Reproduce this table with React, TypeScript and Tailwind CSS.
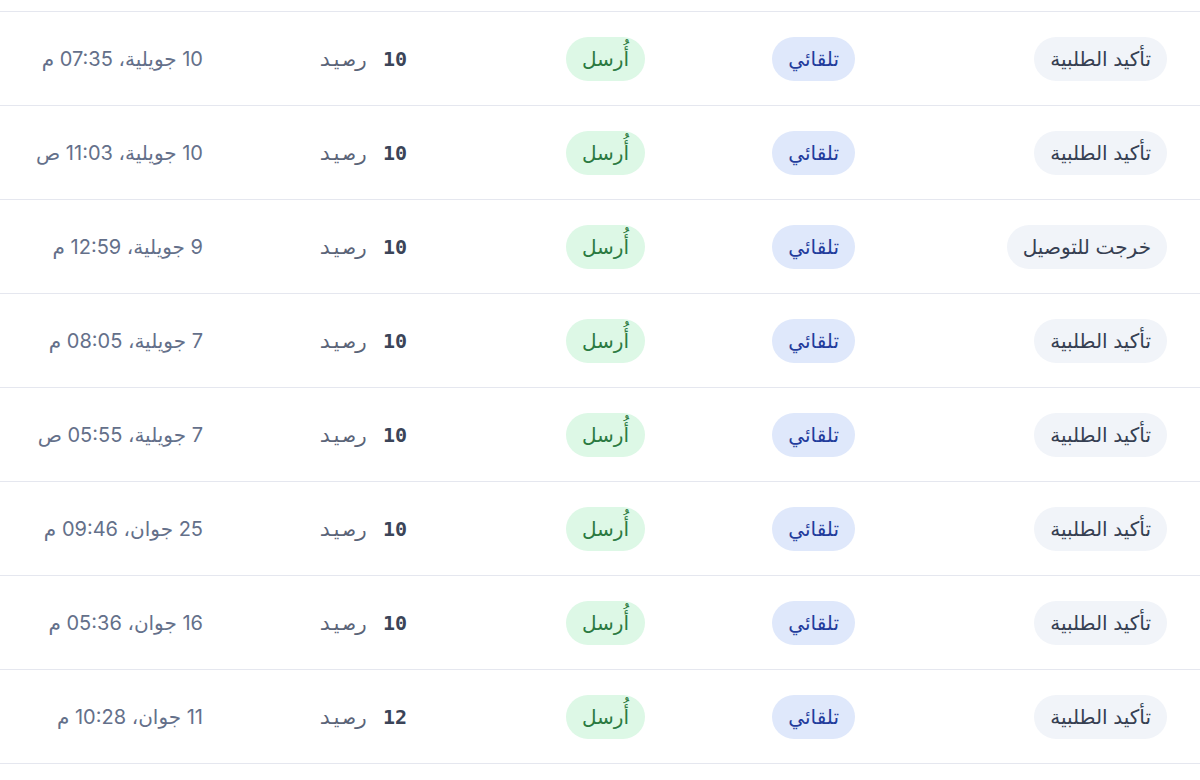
type Row = {
  status: string;
  date: string;
  credits: number;
};

const rows: Row[] = [
  { status: 'تأكيد الطلبية', credits: 10, date: '10 جويلية، 07:35 م' },
  { status: 'تأكيد الطلبية', credits: 10, date: '10 جويلية، 11:03 ص' },
  { status: 'خرجت للتوصيل', credits: 10, date: '9 جويلية، 12:59 م' },
  { status: 'تأكيد الطلبية', credits: 10, date: '7 جويلية، 08:05 م' },
  { status: 'تأكيد الطلبية', credits: 10, date: '7 جويلية، 05:55 ص' },
  { status: 'تأكيد الطلبية', credits: 10, date: '25 جوان، 09:46 م' },
  { status: 'تأكيد الطلبية', credits: 10, date: '16 جوان، 05:36 م' },
  { status: 'تأكيد الطلبية', credits: 12, date: '11 جوان، 10:28 م' },
];

const font = "font-['Inter','DejaVu_Sans',sans-serif]";

export default function App() {
  return (
    <div dir="rtl" className={`min-h-[780px] w-[1200px] bg-white ${font}`}>
      <div className="h-[12px] border-b border-[#e5e7ef]" />
      {rows.map((row, i) => (
        <div key={i} className="flex h-[94px] items-center border-b border-[#e5e7ef]">
          <div className="w-[312px] pr-[33px]">
            <span className="inline-block rounded-full bg-[#f1f4f9] px-4 py-2 text-[20px] leading-7 text-[#363f52]">
              {row.status}
            </span>
          </div>
          <div className="w-[210px] pr-[33px]">
            <span className="inline-block rounded-full bg-[#dfe8fb] px-4 py-2 text-[20px] leading-7 text-[#233c9c]">
              تلقائي
            </span>
          </div>
          <div className="w-[238px] pr-[33px]">
            <span className="inline-block rounded-full bg-[#ddf8e6] px-4 py-2 text-[20px] leading-7 text-[#2b7a41]">
              أُرسل
            </span>
          </div>
          <div className="flex w-[204px] items-baseline gap-[16px] pr-[33px] font-['DejaVu_Sans_Mono',monospace] text-[20px]">
            <span className="font-semibold text-[#3b4458]">{row.credits}</span>
            <span className="tracking-[1px] text-[#5b6478]">رصيد</span>
          </div>
          <div className="w-[236px] pr-[33px] text-[20px] text-[#64708a]">{row.date}</div>
        </div>
      ))}
    </div>
  );
}
